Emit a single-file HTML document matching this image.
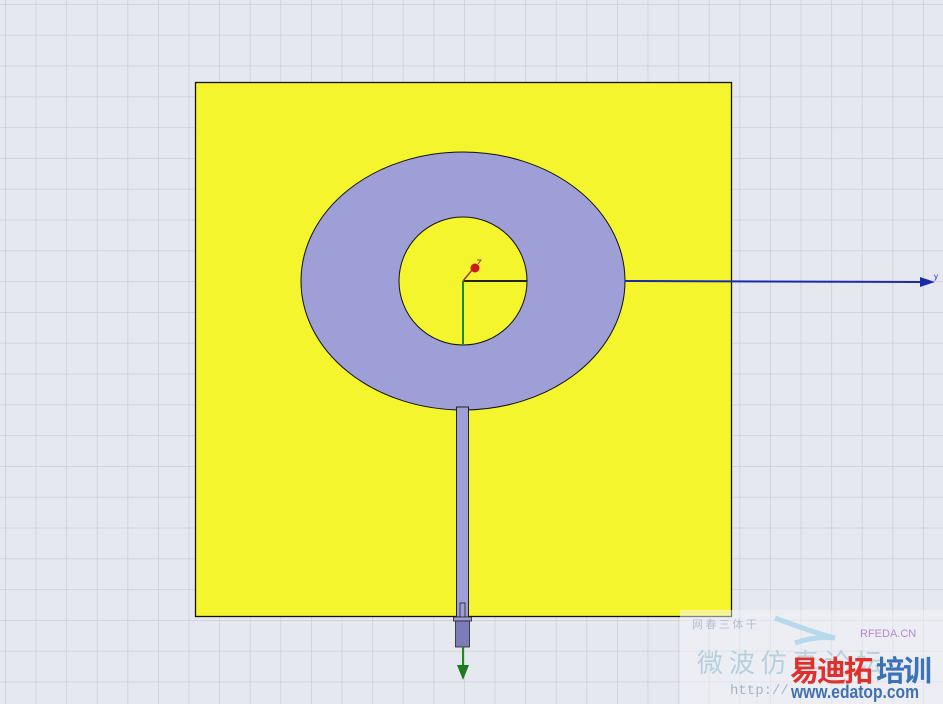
<!DOCTYPE html>
<html><head><style>
html,body{margin:0;padding:0;width:943px;height:704px;overflow:hidden;background:#e6e8f0;}
</style></head><body>
<svg width="943" height="704" xmlns="http://www.w3.org/2000/svg">
<defs>
<pattern id="g" x="5" y="4" width="30.6" height="30.8" patternUnits="userSpaceOnUse">
<path d="M0 0V30.8M0 0H30.6" stroke="#cccdd5" stroke-width="1.5" fill="none"/>
</pattern>
</defs>
<rect width="943" height="704" fill="#e6e8f0"/>
<rect width="943" height="704" fill="url(#g)"/>
<rect x="195.5" y="82.5" width="536" height="534" fill="#f5f52e" stroke="#111" stroke-width="1.3"/>
<ellipse cx="463" cy="281" rx="162" ry="129" fill="#9e9fd6" stroke="#111" stroke-width="1"/>
<circle cx="463" cy="281" r="64" fill="#f5f52e" stroke="#111" stroke-width="1"/>
<rect x="456.5" y="407" width="12" height="210" fill="#9e9fd6" stroke="#222" stroke-width="1"/>
<line x1="463" y1="281" x2="527" y2="281" stroke="#222" stroke-width="2"/>
<line x1="625" y1="281" x2="922" y2="282" stroke="#1a2aa8" stroke-width="2"/>
<polygon points="920,277 935,282 920,287" fill="#1a2aa8"/>
<text x="934" y="279" font-family="Liberation Sans,sans-serif" font-size="8" fill="#1a2aa8">y</text>
<line x1="463" y1="281" x2="463" y2="345" stroke="#1d8a1d" stroke-width="2"/>
<line x1="463" y1="281" x2="472" y2="270" stroke="#a04020" stroke-width="1.5"/>
<circle cx="475" cy="268" r="4.5" fill="#d01818"/>
<path d="M477 260h4l-3 4" stroke="#a04020" fill="none" stroke-width="1"/>
<rect x="460" y="603" width="5" height="14" fill="#9e9fd6" stroke="#222" stroke-width="0.8"/>
<rect x="453.5" y="617" width="18" height="4" fill="#9e9fd6" stroke="#222" stroke-width="0.8"/>
<rect x="455.5" y="621" width="14" height="26" fill="#7c7db8" stroke="#222" stroke-width="0.8"/>
<line x1="463" y1="647" x2="463" y2="668" stroke="#1d8a1d" stroke-width="2"/>
<polygon points="457,665 469,665 463,680" fill="#1d7a1d"/>
<rect x="680" y="610" width="263" height="94" fill="#f2f3f7" opacity="0.5"/>
<path d="M775 618q40 15 60 20q-20 -2 -40 5" stroke="#9fd0e8" stroke-width="5" fill="none" opacity="0.7"/>
<text x="692" y="628" font-family="Noto Sans CJK SC,sans-serif" font-size="11" fill="#a8b4c8" opacity="0.8">网 春 三 体 干</text>
<text x="860" y="637" font-family="Liberation Sans,sans-serif" font-size="11" fill="#b48ad0">RFEDA.CN</text>
<text x="697" y="672" font-family="Noto Sans CJK SC,sans-serif" font-size="26" fill="#a9cad8" opacity="0.8">微 波 仿 真 论 坛</text>
<text x="790" y="681" font-family="Noto Sans CJK SC,sans-serif" font-weight="bold" font-size="29" fill="#e0302a" letter-spacing="-2">易迪拓</text>
<text x="876" y="681" font-family="Noto Sans CJK SC,sans-serif" font-weight="bold" font-size="29" fill="#3c72b8" letter-spacing="-2">培训</text>
<text x="730" y="694" font-family="Liberation Mono,monospace" font-size="14" fill="#a0b8c8">http://</text>
<text x="791" y="698" font-family="Liberation Sans,sans-serif" font-weight="bold" font-size="18" fill="#4070b0" textLength="128" lengthAdjust="spacingAndGlyphs">www.edatop.com</text>
</svg>
</body></html>
